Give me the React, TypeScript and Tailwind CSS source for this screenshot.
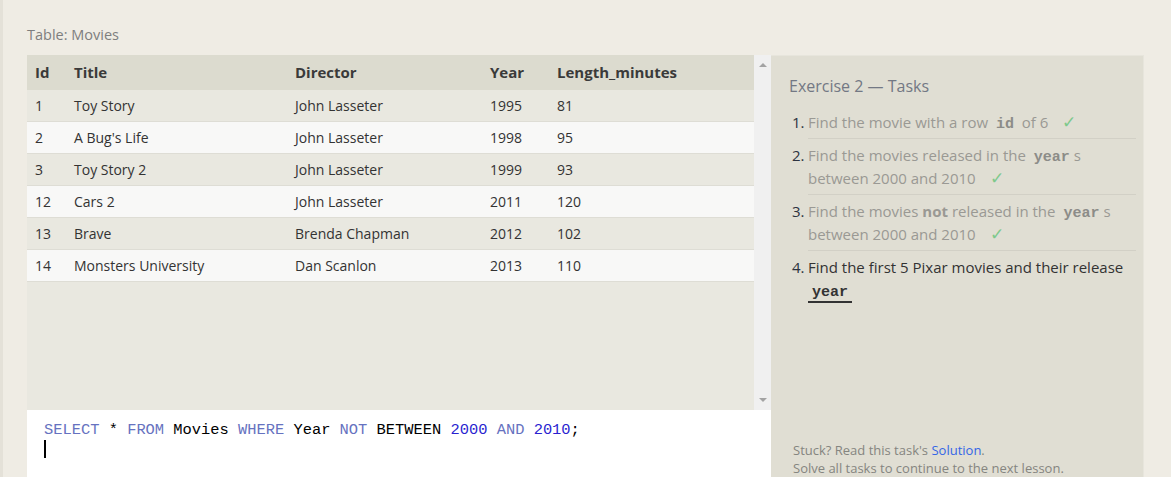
import React from "react";

const rows = [
  ["1", "Toy Story", "John Lasseter", "1995", "81"],
  ["2", "A Bug's Life", "John Lasseter", "1998", "95"],
  ["3", "Toy Story 2", "John Lasseter", "1999", "93"],
  ["12", "Cars 2", "John Lasseter", "2011", "120"],
  ["13", "Brave", "Brenda Chapman", "2012", "102"],
  ["14", "Monsters University", "Dan Scanlon", "2013", "110"],
];

const cols = ["w-[39px]", "w-[221px]", "w-[195px]", "w-[67px]", "w-[205px]"];

function Check() {
  return <span className="ml-[10px] text-[17px] leading-none text-[#7ec98c]">✓</span>;
}

function Code({ children, dark }: { children: React.ReactNode; dark?: boolean }) {
  return (
    <code
      className={
        "px-[4px] font-['Liberation_Mono',monospace] font-bold text-[15px] leading-none " +
        (dark ? "text-[#333]" : "text-[#8c8c88]")
      }
    >
      {children}
    </code>
  );
}

function MoviesTable() {
  return (
    <div className="flex h-[355px]">
      <div className="w-[727px] bg-[#e9e8e0]">
        <div className="flex h-[35px] items-center bg-[#dcdbcf] text-[15px] font-bold text-[#3a3a3a]">
          {["Id", "Title", "Director", "Year", "Length_minutes"].map((h, i) => (
            <div key={h} className={cols[i] + " px-[8px]"}>
              {h}
            </div>
          ))}
        </div>
        {rows.map((r, ri) => (
          <div
            key={ri}
            className={
              "flex h-[32px] items-center border-b border-[#deddd5] text-[14px] text-[#333] " +
              (ri % 2 === 0 ? "bg-[#e9e8e0]" : "bg-[#f8f8f7]")
            }
          >
            {r.map((c, i) => (
              <div key={i} className={cols[i] + " px-[8px]"}>
                {c}
              </div>
            ))}
          </div>
        ))}
      </div>
      {/* scrollbar */}
      <div className="flex w-[17px] flex-col items-center justify-between bg-[#f0f0f0] py-[8px]">
        <div className="h-0 w-0 border-x-[4px] border-b-[4px] border-x-transparent border-b-[#a3a3a3]" />
        <div className="h-0 w-0 border-x-[4px] border-t-[4px] border-x-transparent border-t-[#a3a3a3]" />
      </div>
    </div>
  );
}

function Editor() {
  return (
    <div className="h-[80px] bg-white pl-[17px] pt-[10px] font-['Liberation_Mono',monospace] text-[15.4px] leading-[20px] text-black">
      <div>
        <span className="text-[#6672c0]">SELECT</span> * <span className="text-[#6672c0]">FROM</span> Movies{" "}
        <span className="text-[#6672c0]">WHERE</span> Year <span className="text-[#6672c0]">NOT</span> BETWEEN{" "}
        <span className="text-[#2a1fd0]">2000</span> <span className="text-[#6672c0]">AND</span>{" "}
        <span className="text-[#2a1fd0]">2010</span>;
      </div>
      <div className="h-[18px] w-[2px] bg-black" />
    </div>
  );
}

function Task({ n, last, children }: { n: string; last?: boolean; children: React.ReactNode }) {
  return (
    <li className="flex">
      <span className="w-[19px] shrink-0 pt-[5px] pl-[3px] text-[#2d3340]">{n}</span>
      <div className={"flex-1 pt-[5px] pb-[4px] " + (last ? "text-[#333]" : "border-b border-[#d2d0c6] text-[#9a9994]")}>
        {children}
      </div>
    </li>
  );
}

function Tasks() {
  return (
    <div className="flex h-[430px] w-[373px] flex-col border-t border-r border-[#e7e5dc] bg-[#e0ded3] pl-[18px] pr-[7px]">
      <div className="mt-[19px] text-[16px] leading-[22px] text-[#737884]">Exercise 2 — Tasks</div>
      <ol className="mt-[9px] text-[15px] leading-[23px]">
        <Task n="1.">
          Find the movie with a row <Code>id</Code> of 6 <Check />
        </Task>
        <Task n="2.">
          Find the movies released in the <Code>year</Code>s between 2000 and 2010 <Check />
        </Task>
        <Task n="3.">
          Find the movies <b>not</b> released in the <Code>year</Code>s between 2000 and 2010 <Check />
        </Task>
        <Task n="4." last>
          Find the first 5 Pixar movies and their release{" "}
          <span className="inline-block border-b-2 border-[#333] leading-[22px]">
            <Code dark>year</Code>
          </span>
        </Task>
      </ol>
      <div className="mt-auto pb-[8px] pl-[4px] text-[13px] leading-[18px] text-[#858580]">
        <div>
          Stuck? Read this task's <span className="text-[#3466e6]">Solution</span>.
        </div>
        <div>Solve all tasks to continue to the next lesson.</div>
      </div>
    </div>
  );
}

export default function App() {
  return (
    <div className="h-[477px] overflow-hidden border-l-[3px] border-[#e4e1d8] bg-[#efece4] pl-[24px] pt-[25px] font-['Open_Sans',sans-serif]">
      <div className="h-[30px] text-[14.5px] leading-[20px] text-[#7e7e7e]">Table: Movies</div>
      <div className="flex">
        <div className="w-[744px]">
          <MoviesTable />
          <Editor />
        </div>
        <Tasks />
      </div>
    </div>
  );
}
